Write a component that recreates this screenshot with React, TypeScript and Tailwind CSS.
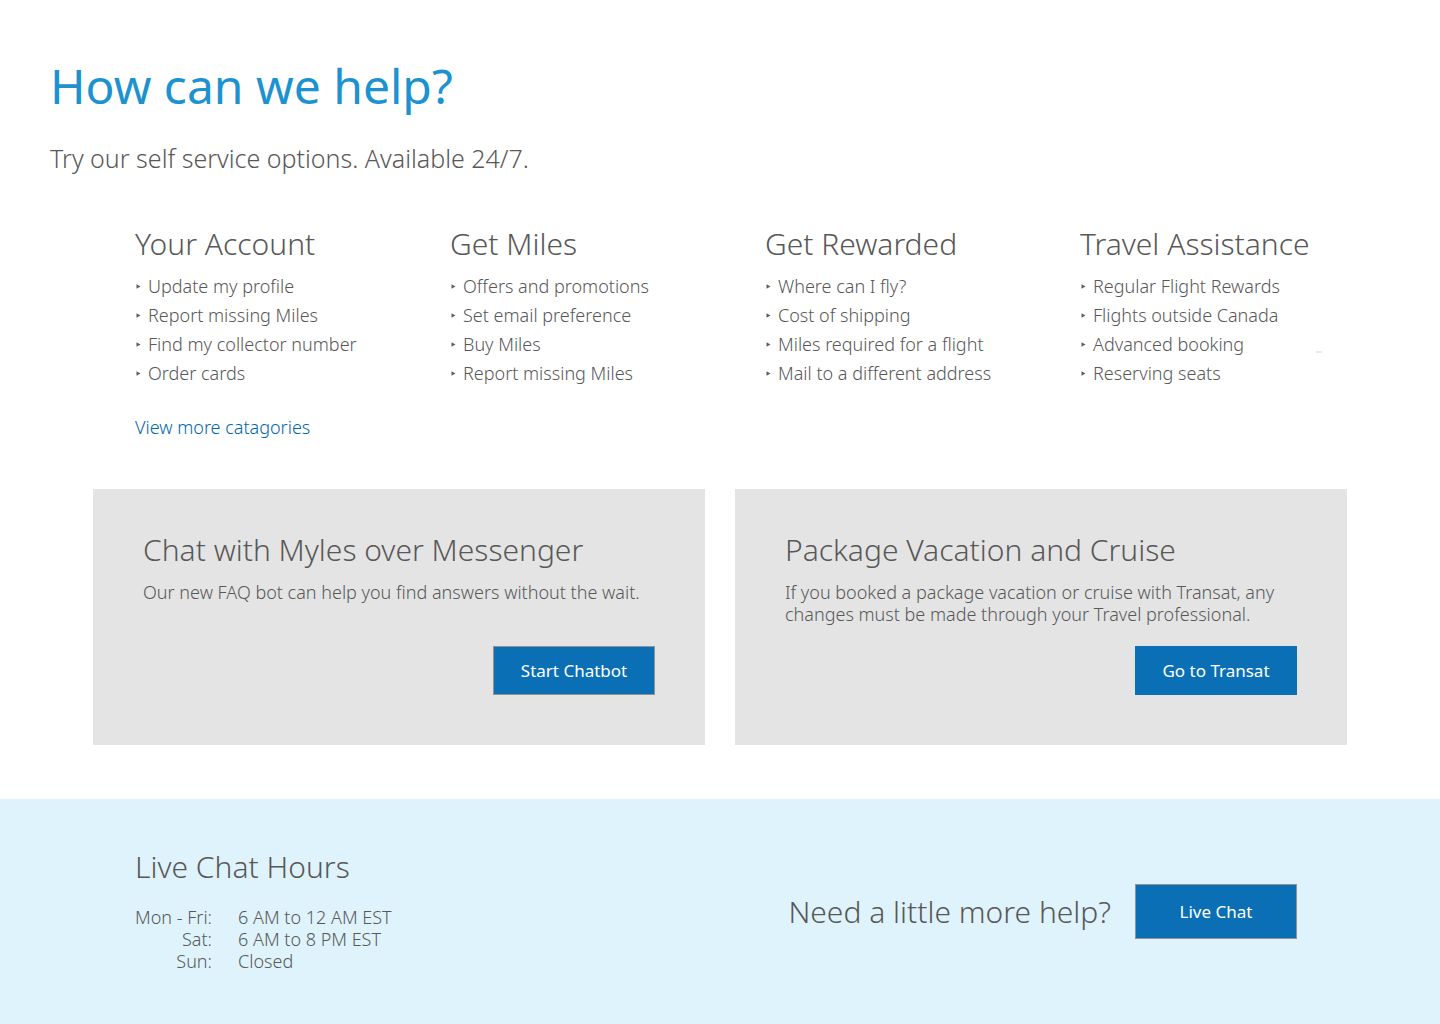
const groups = [
  { title: "Your Account", items: ["Update my profile", "Report missing Miles", "Find my collector number", "Order cards"] },
  { title: "Get Miles", items: ["Offers and promotions", "Set email preference", "Buy Miles", "Report missing Miles"] },
  { title: "Get Rewarded", items: ["Where can I fly?", "Cost of shipping", "Miles required for a flight", "Mail to a different address"] },
  { title: "Travel Assistance", items: ["Regular Flight Rewards", "Flights outside Canada", "Advanced booking", "Reserving seats"] },
];

const hours = [
  ["Mon - Fri:", "6 AM to 12 AM EST"],
  ["Sat:", "6 AM to 8 PM EST"],
  ["Sun:", "Closed"],
];

function Card({ title, text, action, outlined }: { title: string; text: string; action: string; outlined?: boolean }) {
  return (
    <section className="flex min-h-64 flex-col bg-[#e4e4e4] px-[50px] pt-[41px] pb-[50px]">
      <h2 className="text-[30px] leading-10">{title}</h2>
      <p className="mt-[11px] text-lg leading-[22px]">{text}</p>
      <button className={`mt-auto h-[49px] w-[162px] self-end bg-[#0b6fb5] text-[17px] font-normal text-white ${outlined ? "border border-[#969290]" : ""}`}>
        {action}
      </button>
    </section>
  );
}

export default function App() {
  return (
    <div className="flex min-h-screen flex-col bg-white font-['Noto_Sans','Open_Sans',sans-serif] font-light text-[#585858]">
      <header className="px-[50px] pt-[54px]">
        <h1 className="text-[48px] leading-16 font-normal text-[#1c92d0]">How can we help?</h1>
        <p className="mt-6 text-[25px] leading-8">Try our self service options. Available 24/7.</p>
      </header>
      <main className="px-[93px] pt-[50px]">
        <div className="grid grid-cols-[1fr_1fr_1fr_267px] pl-[42px]">
          {groups.map((g) => (
            <nav key={g.title} aria-label={g.title}>
              <h2 className="text-[30px] leading-10 whitespace-nowrap">{g.title}</h2>
              <ul className="mt-2 text-lg leading-[29px]">
                {g.items.map((item) => (
                  <li key={item} className="flex items-center">
                    <svg className="w-[13px]" height="5" viewBox="0 0 13 5" aria-hidden="true"><path d="M1.5 0.2L5.5 2.5L1.5 4.8Z" fill="#5e5e5e" /></svg>
                    <a href="#">{item}</a>
                    {item === "Advanced booking" && <span className="mt-[15px] mr-[25px] ml-auto h-0.5 w-1.5 bg-[#ebebeb]" />}
                  </li>
                ))}
              </ul>
            </nav>
          ))}
        </div>
        <a href="#" className="mt-[25px] ml-[42px] block w-fit text-lg leading-[29px] text-[#0067ad]">View more catagories</a>
        <div className="mt-[47px] grid grid-cols-2 gap-[30px]">
          <Card title="Chat with Myles over Messenger" text="Our new FAQ bot can help you find answers without the wait." action="Start Chatbot" outlined />
          <Card title="Package Vacation and Cruise" text="If you booked a package vacation or cruise with Transat, any changes must be made through your Travel professional." action="Go to Transat" />
        </div>
      </main>
      <footer className="mt-[54px] flex flex-1 items-start justify-between bg-[#dff3fc] pr-[143px] pb-12 pl-[135px]">
        <section className="pt-12">
          <h2 className="text-[30px] leading-10">Live Chat Hours</h2>
          <table className="mt-[19px] text-lg leading-[22px]">
            <tbody>
              {hours.map(([day, time]) => (
                <tr key={day}>
                  <th scope="row" className="p-0 pr-[26px] text-right font-light">{day}</th>
                  <td className="p-0">{time}</td>
                </tr>
              ))}
            </tbody>
          </table>
        </section>
        <section className="flex items-center gap-6 pt-[85px]">
          <h2 className="text-[30px] leading-10">Need a little more help?</h2>
          <button className="h-[55px] w-[162px] border border-[#969290] bg-[#0b6fb5] text-[17px] font-normal text-white">Live Chat</button>
        </section>
      </footer>
    </div>
  );
}
